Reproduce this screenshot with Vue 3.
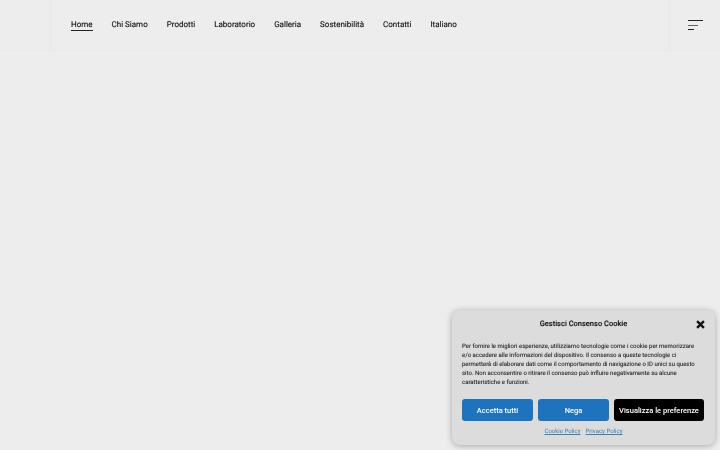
<template>
  <div class="page">
    <header class="topbar">
      <div class="logo-cell"></div>
      <nav class="nav">
        <a v-for="(item, i) in links" :key="item" class="nav-link" :class="{ active: i === 0 }">{{ item }}</a>
      </nav>
      <div class="burger-cell">
        <div class="burger">
          <span class="line long"></span>
          <span class="line mid"></span>
          <span class="line short"></span>
        </div>
      </div>
    </header>

    <div class="cookie-panel">
      <div class="cookie-head">
        <div class="cookie-title">Gestisci Consenso Cookie</div>
        <svg class="cookie-close" viewBox="0 0 10 10" width="9" height="9">
          <path d="M1.2 1.2L8.8 8.8M8.8 1.2L1.2 8.8" stroke="#111" stroke-width="2.6" fill="none" />
        </svg>
      </div>
      <p class="cookie-text">
        Per fornire le migliori esperienze, utilizziamo tecnologie come i cookie per memorizzare
        e/o accedere alle informazioni del dispositivo. Il consenso a queste tecnologie ci
        permetterà di elaborare dati come il comportamento di navigazione o ID unici su questo
        sito. Non acconsentire o ritirare il consenso può influire negativamente su alcune
        caratteristiche e funzioni.
      </p>
      <div class="cookie-actions">
        <button class="btn blue accept">Accetta tutti</button>
        <button class="btn blue deny">Nega</button>
        <button class="btn black prefs">Visualizza le preferenze</button>
      </div>
      <div class="cookie-links">
        <a>Cookie Policy</a>
        <a>Privacy Policy</a>
      </div>
    </div>
  </div>
</template>

<script setup>
const links = ['Home', 'Chi Siamo', 'Prodotti', 'Laboratorio', 'Galleria', 'Sostenibilità', 'Contatti', 'Italiano']
</script>

<style>
html,
body {
  margin: 0;
  background: #ededed;
}
</style>

<style scoped>
.page {
  position: relative;
  width: 720px;
  height: 450px;
  overflow: hidden;
  background: #ededed;
  font-family: Roboto, 'Liberation Sans', sans-serif;
  text-rendering: geometricPrecision;
  /* the reference is a soft, downscaled capture */
  filter: blur(0.3px);
}

.topbar {
  display: flex;
  height: 50px;
  border-bottom: 1px solid #e9e9e9;
}

.logo-cell {
  width: 50px;
  border-right: 1px solid #e8e8e8;
}

.nav {
  flex: 1;
  display: flex;
  align-items: center;
  gap: 19px;
  padding-left: 20px;
}

.nav-link {
  font-size: 8px;
  line-height: 11px;
  color: #111;
  -webkit-text-stroke: 0.12px #111;
  border-bottom: 1px solid transparent;
}

.nav-link.active {
  border-bottom-color: #222;
}

.burger-cell {
  width: 51px;
  box-sizing: border-box;
  border-left: 1px solid #e8e8e8;
  display: flex;
  align-items: center;
  justify-content: flex-end;
  padding-right: 17px;
}

.burger {
  display: flex;
  flex-direction: column;
  gap: 3.5px;
  width: 15px;
}

.line {
  height: 1px;
  background: #222;
}

.line.long {
  width: 15px;
}

.line.mid {
  width: 10px;
  background: #666;
}

.line.short {
  width: 6px;
}

.cookie-panel {
  position: absolute;
  left: 452px;
  top: 310px;
  width: 243px;
  height: 135px;
  padding: 0 10px;
  background: #dcdcdc;
  border-radius: 8px;
  box-shadow: 0 1px 6px rgba(0, 0, 0, 0.3);
}

.cookie-head {
  position: relative;
  display: flex;
  justify-content: center;
  padding-top: 9px;
}

.cookie-title {
  font-size: 7.5px;
  line-height: 10px;
  font-weight: 500;
  color: #111;
  -webkit-text-stroke: 0.1px #111;
}

.cookie-close {
  position: absolute;
  right: 0;
  top: 9.5px;
}

.cookie-text {
  margin: 13px 0 0;
  padding-right: 4px;
  font-size: 6px;
  line-height: 9px;
  color: #222;
  -webkit-text-stroke: 0.08px #222;
}

.cookie-actions {
  display: flex;
  gap: 5px;
  margin-top: 12px;
}

.btn {
  height: 22px;
  border: none;
  border-radius: 3px;
  padding: 0;
  font-family: inherit;
  font-size: 7.5px;
  font-weight: 500;
  color: #fff;
}

.btn.blue {
  background: #1e73be;
}

.btn.black {
  background: #000;
}

.accept,
.deny {
  width: 71px;
}

.prefs {
  width: 90px;
}

.cookie-links {
  display: flex;
  justify-content: center;
  gap: 5px;
  margin-top: 6px;
}

.cookie-links a {
  font-size: 6px;
  line-height: 10px;
  color: #3a7fb8;
  text-decoration: underline;
}
</style>
